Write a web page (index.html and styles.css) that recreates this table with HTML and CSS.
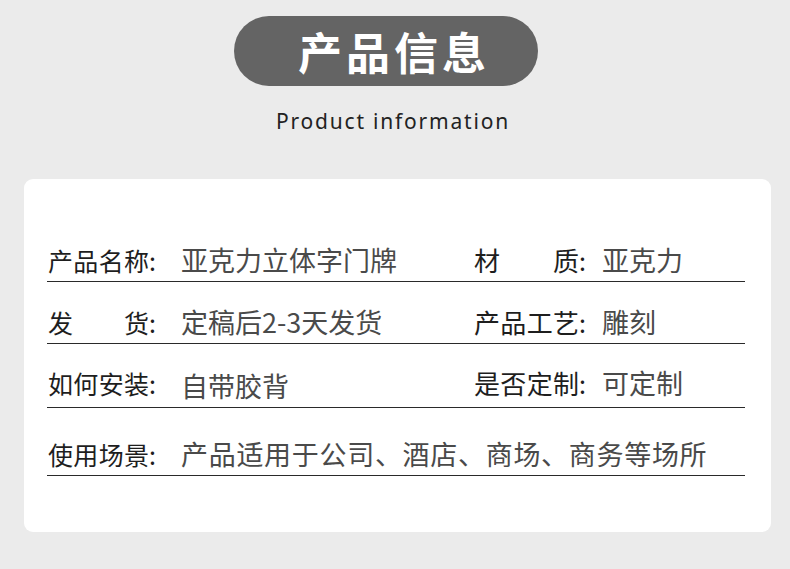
FILE: index.html
```html
<!DOCTYPE html>
<html lang="zh-CN">
<head>
    <meta charset="UTF-8" />
    <meta name="viewport" content="width=device-width, initial-scale=1.0" />
    <title>产品信息</title>
    <link rel="stylesheet" href="styles.css">
</head>
<body>
    <div id="header">
        <div class="pill">产品信息</div>
        <div class="en">Product information</div>
    </div>

    <div id="card">
        <div class="row r1">
            <div class="cell left"><span class="label"><span class="txt">产品名称</span>:</span><span class="value">亚克力立体字门牌</span></div>
            <div class="cell right"><span class="label"><span class="txt">材质</span>:</span><span class="value">亚克力</span></div>
        </div>
        <div class="row r2">
            <div class="cell left"><span class="label"><span class="txt">发货</span>:</span><span class="value">定稿后2-3天发货</span></div>
            <div class="cell right"><span class="label"><span class="txt">产品工艺</span>:</span><span class="value">雕刻</span></div>
        </div>
        <div class="row r3">
            <div class="cell left"><span class="label"><span class="txt">如何安装</span>:</span><span class="value low">自带胶背</span></div>
            <div class="cell right"><span class="label"><span class="txt">是否定制</span>:</span><span class="value">可定制</span></div>
        </div>
        <div class="row r4">
            <div class="cell wide"><span class="label"><span class="txt">使用场景</span>:</span><span class="value spread">产品适用于公司、酒店、商场、商务等场所</span></div>
        </div>
    </div>
</body>
</html>
```

FILE: styles.css
```css
body {
    margin: 0;
    padding: 0;
    background-color: #ebebeb;
    font-family: "Noto Sans CJK SC", "Noto Sans", sans-serif;
    width: 790px;
    height: 569px;
    overflow: hidden;
}

#header {
    padding-top: 16px;
}

.pill {
    width: 304px;
    height: 70px;
    margin-left: 234px;
    border-radius: 35px;
    background-color: #646464;
    color: #fff;
    font-size: 44px;
    font-weight: 700;
    letter-spacing: 4px;
    line-height: 70px;
    text-align: center;
    text-indent: 16px;
}

.en {
    margin-top: 22px;
    padding-right: 4px;
    text-align: center;
    font-family: "Noto Sans", sans-serif;
    font-size: 21px;
    letter-spacing: 1.8px;
    color: #222;
    line-height: 26px;
}

#card {
    margin: 45px 19px 0 24px;
    height: 353px;
    box-sizing: border-box;
    padding: 63px 26px 0 23px;
    background-color: #fff;
    border-radius: 9px;
}

.row {
    display: flex;
    border-bottom: 1px solid #2a2a2a;
    font-size: 25px;
    line-height: 36px;
    padding-bottom: 3px;
}

.r2 {
    margin-top: 22px;
}

.r3 {
    margin-top: 21px;
    padding-bottom: 6px;
}

.r4 {
    margin-top: 28px;
}

.cell {
    display: flex;
    white-space: nowrap;
}

.left {
    width: 426px;
    padding-left: 1px;
}

.wide {
    padding-left: 1px;
}

.label {
    display: inline-flex;
    flex-shrink: 0;
    color: #1e1e1e;
}

.txt {
    flex: 1;
    text-align-last: justify;
}

.left .label,
.wide .label {
    width: 108px;
    margin-right: 25px;
}

.right .label {
    width: 112px;
    margin-right: 16px;
}

.right .txt {
    font-size: 26px;
}

.value {
    color: #4a4a4a;
    font-size: 27px;
}

.spread {
    letter-spacing: 0.7px;
}

.low {
    position: relative;
    top: 3px;
}
```
